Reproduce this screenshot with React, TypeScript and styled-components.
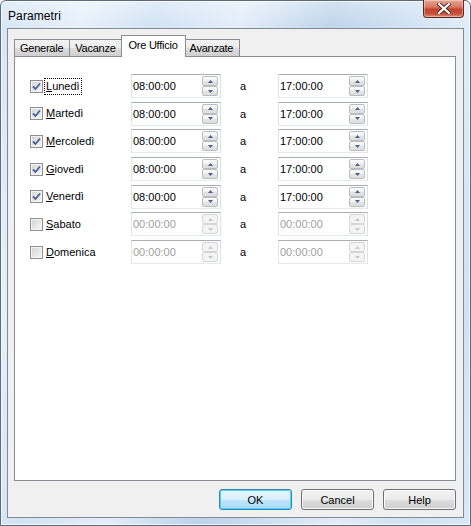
import React from "react";
import styled, { createGlobalStyle, css } from "styled-components";

const Global = createGlobalStyle`
  html, body { margin: 0; padding: 0; background: #fff; }
  body { width: 471px; height: 526px; overflow: hidden; }
  * { box-sizing: border-box; }
`;

const Window = styled.div`
  width: 471px;
  height: 526px;
  display: flex;
  flex-direction: column;
  border: 1px solid #5b6a7d;
  border-radius: 6px 6px 0 0;
  background:
    linear-gradient(180deg, rgba(255,255,255,0.35) 0px, rgba(255,255,255,0) 30px),
    linear-gradient(105deg, #d4e4f5 0%, #e6f0fa 14%, #d0e2f4 26%, #e2edf9 40%, #bcd3ea 55%, #c9dcf0 64%, #e0ecf8 78%, #cfe1f3 90%, #d9e8f7 100%);
  box-shadow: inset 0 0 0 1px rgba(255,255,255,0.7);
  font-family: "Liberation Sans", Arial, sans-serif;
`;

const TitleBar = styled.div`
  height: 27px;
  display: flex;
  justify-content: space-between;
  align-items: flex-start;
  padding-left: 7px;
  padding-right: 6px;
`;

const Title = styled.div`
  font-size: 12px;
  color: #000;
  margin-top: 8px;
  letter-spacing: 0.1px;
`;

const CloseButton = styled.div`
  width: 41px;
  height: 18px;
  margin-top: -1px;
  border: 1px solid #5a2a22;
  border-top: none;
  border-radius: 0 0 4px 4px;
  background: linear-gradient(180deg, #e7a594 0%, #d97a66 40%, #c2452d 55%, #c8503a 80%, #dc8a72 100%);
  box-shadow: inset 0 0 0 1px rgba(255,255,255,0.35);
  display: flex;
  align-items: center;
  justify-content: center;
`;

const Client = styled.div`
  flex: 1;
  margin: 0 6px 7px 6px;
  border: 1px solid #848a94;
  background: #f0f0f0;
  display: flex;
  flex-direction: column;
  padding: 6px 7px 0 6px;
`;

const TabStrip = styled.div`
  display: flex;
  align-items: flex-end;
  height: 21px;
  padding-left: 1px;
  position: relative;
  z-index: 1;
`;

const Tab = styled.div<{ $active?: boolean }>`
  font-size: 11px;
  letter-spacing: -0.25px;
  color: #000;
  height: 17px;
  line-height: 16px;
  padding: 0 6px 0 5px;
  border: 1px solid #898c95;
  border-bottom: none;
  margin-left: -1px;
  background: linear-gradient(180deg, #f3f3f3 0%, #ebebeb 50%, #dddddd 51%, #cfcfcf 100%);
  white-space: nowrap;
  ${(p) =>
    p.$active &&
    css`
      height: 22px;
      line-height: 18px;
      margin-bottom: -1px;
      padding: 0 7px;
      margin-left: -2px;
      margin-right: -1px;
      background: #fff;
      position: relative;
      z-index: 2;
    `}
`;

const Panel = styled.div`
  height: 425px;
  border: 1px solid #898c95;
  background: #fff;
  padding: 17px 0 0 15px;
`;

const Grid = styled.div`
  display: grid;
  grid-template-columns: 101px 90px 57px 90px;
  grid-auto-rows: 24px;
  row-gap: 3.7px;
  align-items: center;
`;

const CheckCell = styled.label`
  display: flex;
  align-items: center;
  gap: 1px;
  font-size: 11px;
  color: #000;
`;

const Box = styled.span`
  width: 13px;
  height: 13px;
  border: 1px solid #8f8f8f;
  background: linear-gradient(135deg, #d3d3d3 0%, #e9e9e9 60%, #f8f8f8 100%);
  box-shadow: inset 0 0 0 1px #f4f4f4;
  display: inline-flex;
  align-items: center;
  justify-content: center;
`;

const Label = styled.span<{ $focus?: boolean }>`
  padding: 1px 1px;
  border: 1px dotted ${(p) => (p.$focus ? "#000" : "transparent")};
  line-height: 13px;
`;

const Field = styled.div<{ $disabled?: boolean }>`
  width: 90px;
  height: 24px;
  border: 1px solid #abadb3;
  border-color: #abadb3 #dbdfe6 #e3e9ef #e2e3ea;
  background: #fff;
  display: flex;
  align-items: center;
  justify-content: space-between;
  padding: 0 2px 0 1px;
  font-size: 11px;
  color: ${(p) => (p.$disabled ? "#a0a0a0" : "#000")};
`;

const Spin = styled.div`
  display: flex;
  flex-direction: column;
  width: 16px;
  height: 20px;
`;

const SpinBtn = styled.div<{ $disabled?: boolean }>`
  flex: 1;
  border: 1px solid ${(p) => (p.$disabled ? "#d6d6d6" : "#b9bcc2")};
  border-radius: 2px;
  background: ${(p) =>
    p.$disabled ? "#f4f4f4" : "linear-gradient(180deg, #fbfbfb 0%, #f0f0f0 50%, #e4e4e4 51%, #dedede 100%)"};
  display: flex;
  align-items: center;
  justify-content: center;
`;

const Sep = styled.div`
  font-size: 11px;
  color: #000;
  padding-left: 19px;
`;

const Footer = styled.div`
  display: flex;
  justify-content: flex-end;
  gap: 9px;
  padding: 8px 0 0 0;
`;

const Button = styled.div<{ $default?: boolean }>`
  width: 73px;
  height: 21px;
  border: 1px solid #707070;
  border-radius: 3px;
  font-size: 11px;
  color: #000;
  display: flex;
  align-items: center;
  justify-content: center;
  background: linear-gradient(180deg, #f2f2f2 0%, #ebebeb 50%, #dddddd 51%, #cfcfcf 100%);
  box-shadow: inset 0 0 0 1px rgba(255,255,255,0.8);
  ${(p) =>
    p.$default &&
    css`
      border-color: #3c7fb1;
      background: linear-gradient(180deg, #eaf6fd 0%, #d9f0fc 50%, #bee6fd 51%, #a7d9f5 100%);
      box-shadow: inset 0 0 0 1px #48d7fb;
    `}
`;

const CheckIcon = () => (
  <svg width="9" height="9" viewBox="0 0 9 9">
    <path d="M1 4.5 L3.5 7 L8 1.5" fill="none" stroke="#4a5f97" strokeWidth="1.8" />
  </svg>
);

const Arrow = ({ up, disabled }: { up?: boolean; disabled?: boolean }) => (
  <svg width="5" height="3" viewBox="0 0 5 3">
    <path d={up ? "M0 3 L2.5 0 L5 3 Z" : "M0 0 L5 0 L2.5 3 Z"} fill={disabled ? "#c8c8c8" : "#4d6185"} />
  </svg>
);

const TimeField = ({ value, disabled }: { value: string; disabled?: boolean }) => (
  <Field $disabled={disabled}>
    <span>{value}</span>
    <Spin>
      <SpinBtn $disabled={disabled}>
        <Arrow up disabled={disabled} />
      </SpinBtn>
      <SpinBtn $disabled={disabled}>
        <Arrow disabled={disabled} />
      </SpinBtn>
    </Spin>
  </Field>
);

const days = [
  { name: "Lunedì", on: true, focus: true },
  { name: "Martedì", on: true },
  { name: "Mercoledì", on: true },
  { name: "Giovedì", on: true },
  { name: "Venerdì", on: true },
  { name: "Sabato", on: false },
  { name: "Domenica", on: false },
];

export default function App() {
  return (
    <>
      <Global />
      <Window>
        <TitleBar>
          <Title>Parametri</Title>
          <CloseButton>
            <svg width="14" height="11" viewBox="0 0 14 11">
              <path d="M2 1 L12 10 M12 1 L2 10" stroke="#4a2a25" strokeWidth="4" strokeLinecap="square" />
              <path d="M2 1 L12 10 M12 1 L2 10" stroke="#fff" strokeWidth="2.2" strokeLinecap="square" />
            </svg>
          </CloseButton>
        </TitleBar>
        <Client>
          <TabStrip>
            <Tab>Generale</Tab>
            <Tab>Vacanze</Tab>
            <Tab $active>Ore Ufficio</Tab>
            <Tab>Avanzate</Tab>
          </TabStrip>
          <Panel>
            <Grid>
              {days.map((d) => (
                <React.Fragment key={d.name}>
                  <CheckCell>
                    <Box>{d.on && <CheckIcon />}</Box>
                    <Label $focus={d.focus}>
                      <u>{d.name[0]}</u>
                      {d.name.slice(1)}
                    </Label>
                  </CheckCell>
                  <TimeField value={d.on ? "08:00:00" : "00:00:00"} disabled={!d.on} />
                  <Sep>a</Sep>
                  <TimeField value={d.on ? "17:00:00" : "00:00:00"} disabled={!d.on} />
                </React.Fragment>
              ))}
            </Grid>
          </Panel>
          <Footer>
            <Button $default>OK</Button>
            <Button>Cancel</Button>
            <Button>Help</Button>
          </Footer>
        </Client>
      </Window>
    </>
  );
}
